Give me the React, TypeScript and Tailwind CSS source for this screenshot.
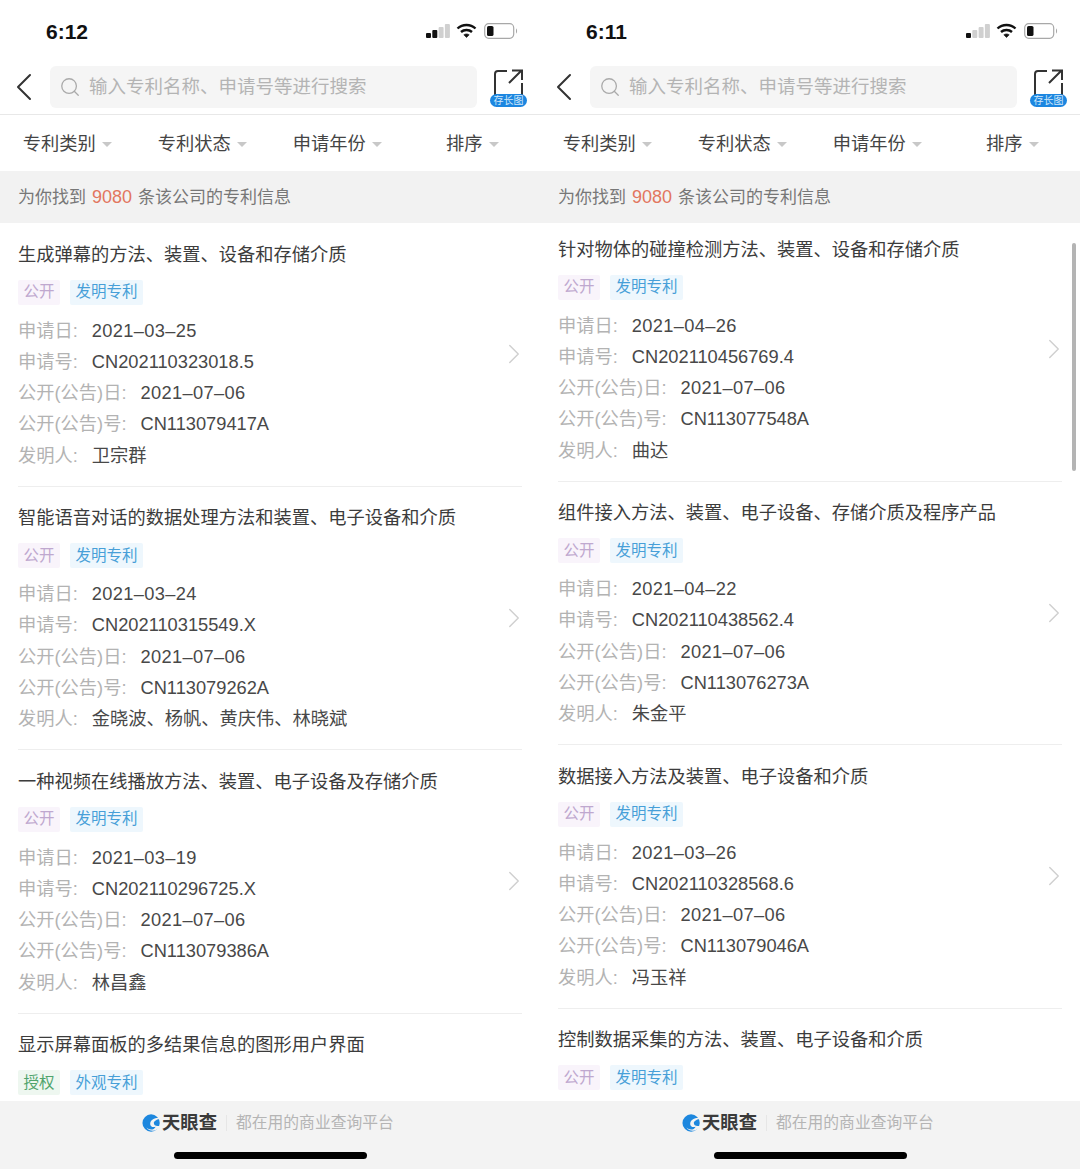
import { ChevronLeft, ChevronRight, Search } from "lucide-react";

type Patent = {
    title: string;
    status: string;
    kind: string;
    applyDate?: string;
    applyNo?: string;
    pubDate?: string;
    pubNo?: string;
    inventor?: string;
};

const leftPatents: Patent[] = [
    { title: "生成弹幕的方法、装置、设备和存储介质", status: "公开", kind: "发明专利", applyDate: "2021–03–25", applyNo: "CN202110323018.5", pubDate: "2021–07–06", pubNo: "CN113079417A", inventor: "卫宗群" },
    { title: "智能语音对话的数据处理方法和装置、电子设备和介质", status: "公开", kind: "发明专利", applyDate: "2021–03–24", applyNo: "CN202110315549.X", pubDate: "2021–07–06", pubNo: "CN113079262A", inventor: "金晓波、杨帆、黄庆伟、林晓斌" },
    { title: "一种视频在线播放方法、装置、电子设备及存储介质", status: "公开", kind: "发明专利", applyDate: "2021–03–19", applyNo: "CN202110296725.X", pubDate: "2021–07–06", pubNo: "CN113079386A", inventor: "林昌鑫" },
    { title: "显示屏幕面板的多结果信息的图形用户界面", status: "授权", kind: "外观专利" },
];

const rightPatents: Patent[] = [
    { title: "针对物体的碰撞检测方法、装置、设备和存储介质", status: "公开", kind: "发明专利", applyDate: "2021–04–26", applyNo: "CN202110456769.4", pubDate: "2021–07–06", pubNo: "CN113077548A", inventor: "曲达" },
    { title: "组件接入方法、装置、电子设备、存储介质及程序产品", status: "公开", kind: "发明专利", applyDate: "2021–04–22", applyNo: "CN202110438562.4", pubDate: "2021–07–06", pubNo: "CN113076273A", inventor: "朱金平" },
    { title: "数据接入方法及装置、电子设备和介质", status: "公开", kind: "发明专利", applyDate: "2021–03–26", applyNo: "CN202110328568.6", pubDate: "2021–07–06", pubNo: "CN113079046A", inventor: "冯玉祥" },
    { title: "控制数据采集的方法、装置、电子设备和介质", status: "公开", kind: "发明专利" },
];

const filters = ["专利类别", "专利状态", "申请年份", "排序"];

function StatusIcons({ bars }: { bars: number }) {
    return (
        <div className="flex items-center">
            <svg width="24" height="16" viewBox="0 0 24 16">
                {[0, 1, 2, 3].map((i) => (
                    <rect
                        key={i}
                        x={i * 6.3}
                        y={10 - i * 3}
                        width="5"
                        height={5 + i * 3}
                        rx="1"
                        fill={i < bars ? "#111" : "#d0d0d0"}
                    />
                ))}
            </svg>
            <svg width="21" height="16" viewBox="0 0 21 16" fill="none" stroke="#111" strokeWidth="2.4" className="ml-[6px]">
                <path d="M1.5 5.5 C6.5 0.8 14.5 0.8 19.5 5.5" />
                <path d="M5 9 C8 6.3 13 6.3 16 9" />
                <path d="M10.5 14.5 L7.8 11.8 C9.3 10.6 11.7 10.6 13.2 11.8 Z" fill="#111" strokeWidth="0.6" />
            </svg>
            <svg width="34" height="16" viewBox="0 0 34 16" fill="none" className="ml-[7px]">
                <rect x="0.7" y="0.7" width="29" height="14.6" rx="4" stroke="#a8a8a8" strokeWidth="1.2" />
                <rect x="3" y="3" width="6.5" height="10" rx="1.6" fill="#111" />
                <path d="M32 5.5 C33.4 6 33.4 10 32 10.5 Z" fill="#a8a8a8" />
            </svg>
        </div>
    );
}

function LongShotIcon() {
    return (
        <div className="relative h-[36px] w-[38px] shrink-0">
            <svg width="38" height="36" viewBox="0 0 38 36" fill="none" stroke="#333" strokeWidth="2" className="mx-auto">
                <path d="M17 2 H8 Q5 2 5 5 V26" />
                <path d="M32 14 V26" />
                <path d="M19 14 L31 2 M22 1.5 H32 V11" />
            </svg>
            <div className="absolute bottom-[-2px] left-0 flex h-[13px] w-[37px] items-center justify-center rounded-full bg-[#1c86e0] text-[10px] leading-none text-[#cfe6fa]">
                存长图
            </div>
        </div>
    );
}

function Tag({ text, kind }: { text: string; kind: "public" | "grant" | "type" }) {
    const tone =
        kind === "public"
            ? "bg-[#f9f4fb] text-[#bfa8cf]"
            : kind === "grant"
              ? "bg-[#eef7f0] text-[#4fa46c]"
              : "bg-[#eef7fd] text-[#479fd8]";
    return (
        <span className={`flex h-[25px] items-center rounded-[2px] px-[5.5px] text-[15.5px] leading-none ${tone}`}>{text}</span>
    );
}

function MetaRow({ label, value, wide }: { label: string; value: string; wide?: boolean }) {
    return (
        <div className="flex h-[31.3px] items-center text-[18.25px] leading-none">
            <span className="text-[#b3b3b3]">{label}:</span>
            <span className={`ml-[14px] text-[#484848] ${wide ? "tracking-[0.35px]" : ""}`}>{value}</span>
        </div>
    );
}

function PatentItem({ patent }: { patent: Patent }) {
    return (
        <div className="mx-[18px] flex h-[263.5px] shrink-0 items-start justify-between border-b border-[#eeeeee] pt-[19.5px]">
            <div className="flex flex-col">
                <div className="text-[18.25px] leading-[24px] whitespace-nowrap text-[#3c3c3c]">{patent.title}</div>
                <div className="mt-[13px] flex gap-[10px]">
                    <Tag text={patent.status} kind={patent.status === "授权" ? "grant" : "public"} />
                    <Tag text={patent.kind} kind="type" />
                </div>
                {patent.inventor && (
                    <div className="mt-[10.5px] flex flex-col">
                        <MetaRow label="申请日" value={patent.applyDate ?? ""} wide />
                        <MetaRow label="申请号" value={patent.applyNo ?? ""} />
                        <MetaRow label="公开(公告)日" value={patent.pubDate ?? ""} wide />
                        <MetaRow label="公开(公告)号" value={patent.pubNo ?? ""} />
                        <MetaRow label="发明人" value={patent.inventor} />
                    </div>
                )}
            </div>
            <ChevronRight className="mt-[-20px] mr-[-8.5px] h-[34px] w-[34px] self-center text-[#d0d0d0]" strokeWidth={1} />
        </div>
    );
}

function Logo() {
    return (
        <div className="flex items-center">
            <svg width="20" height="20" viewBox="0 0 22 20">
                <circle cx="10" cy="10" r="9.5" fill="#1d87de" />
                <path d="M21 5 C15 3 9 6 9 11 C9 14 12 15 15 14 C13 18 8 18 5 15 C8 20 17 20 20 13 C16 14 13 13 13 10 C13 8 16 6 21 5 Z" fill="#f3f3f3" />
            </svg>
            <span className="text-[18.3px] leading-none font-bold text-[#3a3a3a]">天眼查</span>
        </div>
    );
}

function Phone({
    time,
    bars,
    patents,
    scrolled,
}: {
    time: string;
    bars: number;
    patents: Patent[];
    scrolled?: boolean;
}) {
    return (
        <div className="relative flex h-[1169px] w-[540px] shrink-0 flex-col overflow-hidden bg-white">
            <div className="flex h-[60px] shrink-0 items-center justify-between pt-[2px] pr-[22px] pl-[46px]">
                <span className="text-[21px] leading-none font-semibold text-[#111]">{time}</span>
                <StatusIcons bars={bars} />
            </div>

            <div className="flex h-[55px] shrink-0 items-center border-b border-[#e8e8e8]">
                <ChevronLeft className="h-[48px] w-[48px] shrink-0 text-[#333]" strokeWidth={1} />
                <div className="ml-[2px] flex h-[42px] w-[427px] items-center rounded-[6px] bg-[#f5f5f5] pl-[9px]">
                    <Search className="h-[22px] w-[22px] text-[#aaaaaa]" strokeWidth={1.4} />
                    <span className="ml-[8px] text-[18.5px] leading-none text-[#b4b4b4]">输入专利名称、申请号等进行搜索</span>
                </div>
                <div className="ml-[13px]">
                    <LongShotIcon />
                </div>
            </div>

            <div className="grid h-[56px] shrink-0 grid-cols-4 pt-[2px]">
                {filters.map((f) => (
                    <div key={f} className="flex items-center justify-center gap-[6.5px]">
                        <span className="text-[18.25px] leading-none text-[#444]">{f}</span>
                        <span className="mt-[1px] h-0 w-0 border-x-[5px] border-t-[5px] border-x-transparent border-t-[#c8c8c8]" />
                    </div>
                ))}
            </div>

            <div className="flex h-[52px] shrink-0 items-center bg-[#f2f2f2] px-[18px] text-[17px] leading-none text-[#777]">
                为你找到<span className="mx-[6px] text-[18px] text-[#e2765f]">9080</span>条该公司的专利信息
            </div>

            <div className={`flex min-h-0 flex-1 flex-col overflow-hidden ${scrolled ? "-mt-[5px]" : ""}`}>
                {patents.map((p) => (
                    <PatentItem key={p.title} patent={p} />
                ))}
            </div>

            {scrolled && <div className="absolute top-[243px] right-[4px] h-[228px] w-[4px] rounded-full bg-[#b4b4b4]" />}

            <div className="flex h-[68px] shrink-0 flex-col items-center bg-[#f3f3f3]">
                <div className="mt-[12px] mr-[4px] flex h-[20px] items-center">
                    <Logo />
                    <span className="mx-[9px] h-[16px] w-px bg-[#e6e6e6]" />
                    <span className="text-[15.8px] leading-none text-[#b5b5b5]">都在用的商业查询平台</span>
                </div>
                <div className="mt-[19px] h-[7px] w-[193px] rounded-full bg-black" />
            </div>
        </div>
    );
}

export default function App() {
    return (
        <div className="flex h-[1169px] w-[1080px] overflow-hidden bg-white font-['Liberation_Sans','Noto_Sans_CJK_SC',sans-serif]">
            <Phone time="6:12" bars={2} patents={leftPatents} />
            <Phone time="6:11" bars={1} patents={rightPatents} scrolled />
        </div>
    );
}
